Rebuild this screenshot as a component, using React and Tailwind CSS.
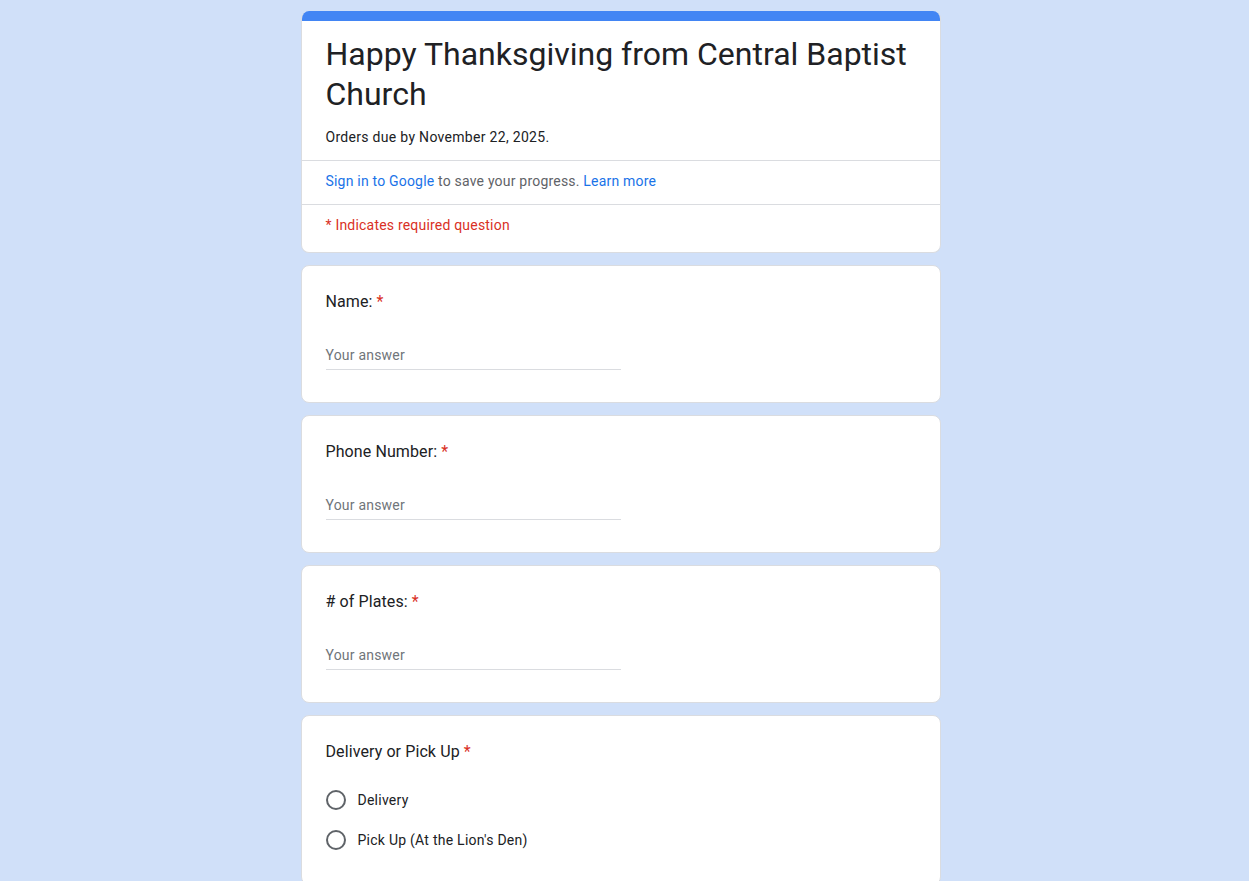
import React from "react";

const Required = () => <span className="text-[#d93025] ml-1">*</span>;

const TextQuestion = ({ label }) => (
  <div className="bg-white border border-[#dadce0] rounded-lg px-6 pt-6 pb-8">
    <div className="text-base leading-6 text-[#202124] tracking-[0.1px]">
      {label}
      <Required />
    </div>
    <div className="mt-[31px] w-1/2 border-b border-[#dadce0] pb-1">
      <div className="text-sm leading-5 text-[#70757a] tracking-[0.2px]">Your answer</div>
    </div>
  </div>
);

const RadioOption = ({ label }) => (
  <div className="flex items-center h-10">
    <span className="w-5 h-5 rounded-full border-2 border-[#5f6368]" />
    <span className="ml-3 text-sm text-[#202124] tracking-[0.25px]">{label}</span>
  </div>
);

const App = () => {
  return (
    <div className="min-h-screen bg-[#d0e0f9] pt-[11px] pb-10 pr-2 flex justify-center font-['Roboto',_'Liberation_Sans',_sans-serif]">
      <div className="w-[640px] flex flex-col gap-3">
        {/* header */}
        <div className="bg-white border border-[#dadce0] border-t-0 rounded-lg overflow-hidden">
          <div className="h-[10px] bg-[#4285f4]" />
          <div className="px-6 pt-[13px] pb-[13px]">
            <h1 className="text-[32px] leading-10 text-[#202124]">
              Happy Thanksgiving from Central Baptist Church
            </h1>
            <p className="mt-[13px] text-sm leading-5 text-[#202124] tracking-[0.3px]">Orders due by November 22, 2025.</p>
          </div>
          <div className="border-t border-[#dadce0] px-6 pt-[10px] pb-[13px] text-sm leading-5 text-[#5f6368] tracking-[0.2px]">
            <span className="text-[#1a73e8]">Sign in to Google</span> to save your progress.{" "}
            <span className="text-[#1a73e8]">Learn more</span>
          </div>
          <div className="border-t border-[#dadce0] px-6 pt-[10px] pb-[17px] text-sm leading-5 text-[#d93025] tracking-[0.2px]">
            * Indicates required question
          </div>
        </div>

        <TextQuestion label="Name:" />
        <TextQuestion label="Phone Number:" />
        <TextQuestion label="# of Plates:" />

        <div className="bg-white border border-[#dadce0] rounded-lg px-6 pt-6 pb-6">
          <div className="text-base leading-6 text-[#202124] tracking-[0.1px]">
            Delivery or Pick Up
            <Required />
          </div>
          <div className="mt-4 flex flex-col">
            <RadioOption label="Delivery" />
            <RadioOption label="Pick Up (At the Lion's Den)" />
          </div>
        </div>
      </div>
    </div>
  );
};

export default App;
